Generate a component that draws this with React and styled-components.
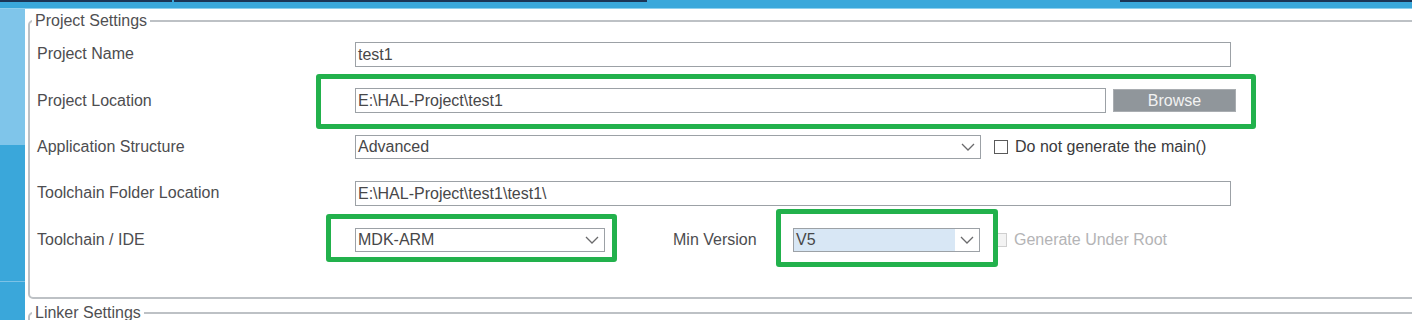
import React from "react";
import styled, { createGlobalStyle, css } from "styled-components";

const Global = createGlobalStyle`
  html, body { margin: 0; padding: 0; background: #ffffff; }
  body { font-family: "Liberation Sans", Arial, sans-serif; }
  * { box-sizing: border-box; }
`;

const Page = styled.div`
  width: 1412px;
  height: 320px;
  overflow: hidden;
  display: flex;
  flex-direction: column;
  background: #ffffff;
  font-family: "Liberation Sans", Arial, sans-serif;
  font-size: 16px;
`;

const TopBar = styled.div`
  height: 9px;
  flex: none;
  background: #3aa8db;
  border-bottom: 1px solid #8fd0ee;
  display: flex;
  align-items: flex-start;
`;

const TabEdge = styled.div`
  height: 2px;
  width: ${(p) => p.$w}px;
  margin-left: ${(p) => p.$gap || 0}px;
  background: ${(p) => (p.$dark ? "#1b3556" : "transparent")};
  flex: none;
`;

const Body = styled.div`
  flex: 1;
  display: flex;
  min-height: 0;
`;

const Sidebar = styled.div`
  width: 25px;
  flex: none;
  display: flex;
  flex-direction: column;
`;

const SideSelected = styled.div`
  height: 136px;
  background: #7fc5ea;
`;

const SideRest = styled.div`
  flex: 1;
  background: #3aa7da;
  padding-top: 136px;
`;

const SideDivider = styled.div`
  height: 1px;
  background: #7cc2e6;
`;

const Main = styled.div`
  flex: 1;
  min-width: 0;
  overflow: hidden;
  padding: 3px 0 0 3px;
`;

const Group = styled.fieldset`
  margin: 0 -40px ${(p) => p.$gapBelow || 0}px 0;
  padding: 0;
  border: 2px solid #bdc1c5;
  border-radius: 5px;
  min-width: 0;
`;

const Legend = styled.legend`
  margin-left: 2px;
  padding: 0 3px;
  font-size: 16px;
  line-height: 18px;
  color: #4f4f52;
`;

const Form = styled.div`
  display: grid;
  grid-template-columns: 318px 1fr;
  grid-auto-rows: 46.4px;
  align-items: center;
  padding: 1px 0 34px 7px;
`;

const Label = styled.div`
  color: #4d4d50;
  font-size: 16px;
  line-height: 18px;
  white-space: nowrap;
`;

const Cell = styled.div`
  display: flex;
  align-items: center;
`;

const fieldBox = css`
  height: 25px;
  border: 1px solid #9ca1a6;
  background: #ffffff;
  color: #474749;
  font-size: 16px;
  line-height: 23px;
  padding: 0 2px;
  white-space: nowrap;
`;

const TextField = styled.div`
  ${fieldBox};
  width: ${(p) => p.$w}px;
  flex: none;
`;

const Combo = styled.div`
  ${fieldBox};
  width: ${(p) => p.$w}px;
  flex: none;
  display: flex;
  align-items: stretch;
  padding: 0;
  height: 24px;
  line-height: 22px;
`;

const ComboText = styled.div`
  flex: 1;
  padding: 0 2px;
  background: ${(p) => (p.$selected ? "#d8e7f5" : "transparent")};
`;

const ComboArrow = styled.div`
  width: 24px;
  flex: none;
  display: flex;
  align-items: center;
  justify-content: center;
  background: #ffffff;
`;

const BrowseButton = styled.div`
  width: 123px;
  height: 23px;
  margin-left: 7px;
  flex: none;
  background: #90969b;
  border: 1px solid #a9adb1;
  color: #f2f2f2;
  font-size: 16px;
  line-height: 21px;
  text-align: center;
`;

const Check = styled.div`
  display: flex;
  align-items: center;
  gap: 7px;
  margin-left: ${(p) => p.$ml}px;
  color: ${(p) => (p.$disabled ? "#b4b4b6" : "#3a3a3c")};
  font-size: 16px;
  line-height: 18px;
  white-space: nowrap;
`;

const Box = styled.span`
  width: 14px;
  height: 14px;
  flex: none;
  border: 1px solid ${(p) => (p.$disabled ? "#cfcfcf" : "#5a5a5a")};
  background: ${(p) => (p.$disabled ? "#f3f3f3" : "#ffffff")};
`;

const InlineLabel = styled.div`
  width: ${(p) => p.$w}px;
  margin-left: ${(p) => p.$ml}px;
  flex: none;
  color: #4d4d50;
  font-size: 16px;
  line-height: 18px;
`;

const Highlighted = styled.div`
  position: relative;
  display: flex;
  align-items: center;
  flex: none;
  &::after {
    content: "";
    position: absolute;
    top: -${(p) => p.$t}px;
    right: -${(p) => p.$r}px;
    bottom: -${(p) => p.$b}px;
    left: -${(p) => p.$l}px;
    border: 5px solid #22b14c;
    border-radius: 3px;
    pointer-events: none;
  }
`;

const Chevron = () => (
  <svg width="14" height="8" viewBox="0 0 14 8" aria-hidden="true">
    <polyline points="1,1 7,7 13,1" fill="none" stroke="#6a6a6c" strokeWidth="1.3" />
  </svg>
);

const Dropdown = ({ w, value, selected }) => (
  <Combo $w={w}>
    <ComboText $selected={selected}>{value}</ComboText>
    <ComboArrow>
      <Chevron />
    </ComboArrow>
  </Combo>
);

export default function App() {
  return (
    <>
      <Global />
      <Page>
        <TopBar>
          <TabEdge $dark $w={172} />
          <TabEdge $dark $w={473} $gap={2} />
          <TabEdge $dark $w={292} $gap={473} />
        </TopBar>
        <Body>
          <Sidebar>
            <SideSelected />
            <SideRest>
              <SideDivider />
            </SideRest>
          </Sidebar>
          <Main>
            <Group $gapBelow={5}>
              <Legend>Project Settings</Legend>
              <Form>
                <Label>Project Name</Label>
                <Cell>
                  <TextField $w={876}>test1</TextField>
                </Cell>

                <Label>Project Location</Label>
                <Cell>
                  <Highlighted $t={14} $r={20} $b={16} $l={39}>
                    <TextField $w={751}>E:\HAL-Project\test1</TextField>
                    <BrowseButton>Browse</BrowseButton>
                  </Highlighted>
                </Cell>

                <Label>Application Structure</Label>
                <Cell>
                  <Dropdown w={626} value="Advanced" />
                  <Check $ml={13}>
                    <Box />
                    Do not generate the main()
                  </Check>
                </Cell>

                <Label>Toolchain Folder Location</Label>
                <Cell>
                  <TextField $w={876}>E:\HAL-Project\test1\test1\</TextField>
                </Cell>

                <Label>Toolchain / IDE</Label>
                <Cell>
                  <Highlighted $t={14} $r={12} $b={10} $l={29}>
                    <Dropdown w={250} value="MDK-ARM" />
                  </Highlighted>
                  <InlineLabel $w={120} $ml={68}>Min Version</InlineLabel>
                  <Highlighted $t={19} $r={18} $b={15} $l={17}>
                    <Dropdown w={187} value="V5" selected />
                  </Highlighted>
                  <Check $ml={13} $disabled>
                    <Box $disabled />
                    Generate Under Root
                  </Check>
                </Cell>
              </Form>
            </Group>
            <Group>
              <Legend>Linker Settings</Legend>
              <Form />
            </Group>
          </Main>
        </Body>
      </Page>
    </>
  );
}
